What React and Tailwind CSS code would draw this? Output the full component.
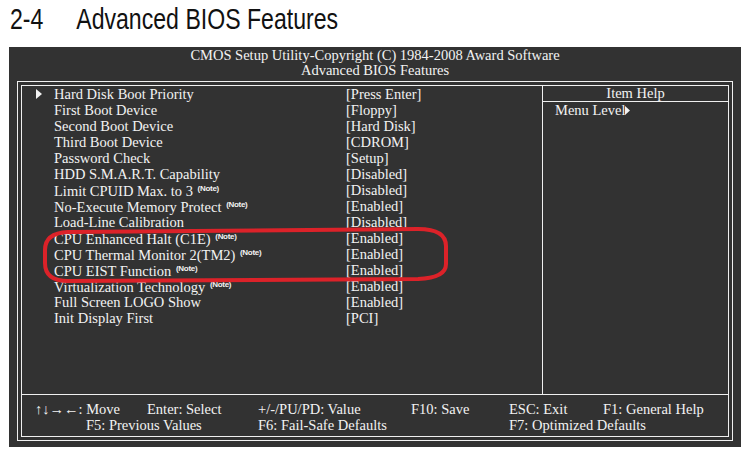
const serif = { fontFamily: '"Liberation Serif", "Times New Roman", serif' };

const rows = [
  { label: "Hard Disk Boot Priority", value: "[Press Enter]", arrow: true },
  { label: "First Boot Device", value: "[Floppy]" },
  { label: "Second Boot Device", value: "[Hard Disk]" },
  { label: "Third Boot Device", value: "[CDROM]" },
  { label: "Password Check", value: "[Setup]" },
  { label: "HDD S.M.A.R.T. Capability", value: "[Disabled]" },
  { label: "Limit CPUID Max. to 3", value: "[Disabled]", note: true },
  { label: "No-Execute Memory Protect", value: "[Enabled]", note: true },
  { label: "Load-Line Calibration", value: "[Disabled]" },
  { label: "CPU Enhanced Halt (C1E)", value: "[Enabled]", note: true },
  { label: "CPU Thermal Monitor 2(TM2)", value: "[Enabled]", note: true },
  { label: "CPU EIST Function", value: "[Enabled]", note: true },
  { label: "Virtualization Technology", value: "[Enabled]", note: true },
  { label: "Full Screen LOGO Show", value: "[Enabled]" },
  { label: "Init Display First", value: "[PCI]" },
];

function Note() {
  return (
    <span
      className="text-[8px] font-bold tracking-[-0.3px] align-[5px] ml-[1px]"
      style={{ fontFamily: '"Liberation Sans", Arial, sans-serif' }}
    >
      (Note)
    </span>
  );
}

function Triangle({ w = 6, h = 10 }) {
  return (
    <svg width={w} height={h} viewBox={`0 0 ${w} ${h}`} className="inline-block">
      <polygon points={`0,0 ${w},${h / 2} 0,${h}`} fill="#f2f2f2" />
    </svg>
  );
}

export default function App() {
  return (
    <div className="w-[744px] h-[455px] bg-white relative overflow-hidden">
      {/* page heading, condensed sans */}
      <div className="h-[47px] pl-[10px] pt-[3px]">
        <div
          className="flex text-[30px] leading-[32px] text-[#111] scale-x-[0.77] origin-left whitespace-nowrap"
          style={{ fontFamily: '"Liberation Sans", Arial, sans-serif' }}
        >
          <span className="w-[86px]">2-4</span>
          <span>Advanced BIOS Features</span>
        </div>
      </div>

      {/* bios screen */}
      <div className="ml-[9px] w-[732px] h-[400px] bg-[#323232] text-[#f2f2f2] text-[14.5px] leading-[15px]" style={serif}>
        <div className="pt-[1px] text-center">
          <div>CMOS Setup Utility-Copyright (C) 1984-2008 Award Software</div>
          <div>Advanced BIOS Features</div>
        </div>

        <div className="ml-[8px] mt-[3px] w-[716px] h-[360px] border border-[#f0f0f0] p-[3px]">
          <div className="h-full border border-[#f0f0f0] flex flex-col">
            <div className="flex h-[309px] border-b border-[#f0f0f0]">
              {/* settings list */}
              <div className="w-[521px] border-r border-[#f0f0f0]">
                {rows.map((r) => (
                  <div key={r.label} className="flex h-[16px] items-center leading-[16px]">
                    <div className="w-[32px] pl-[14px] flex items-center">{r.arrow && <Triangle />}</div>
                    <div className="w-[292px] whitespace-nowrap">
                      {r.label}
                      {r.note && <> <Note /></>}
                    </div>
                    <div>{r.value}</div>
                  </div>
                ))}
              </div>
              {/* item help */}
              <div className="flex-1">
                <div className="h-[16px] border-b border-[#f0f0f0] text-center leading-[15px]">Item Help</div>
                <div className="pl-[12px] h-[16px] leading-[16px] flex items-center">
                  Menu Level
                  <Triangle w={5} h={9} />
                </div>
              </div>
            </div>

            {/* key legend */}
            <div className="pt-[6px] leading-[16px] whitespace-nowrap">
              <div className="flex pl-[13px]">
                <span className="w-[112px]">↑↓→←: Move</span>
                <span className="w-[111px]">Enter: Select</span>
                <span className="w-[153px]">+/-/PU/PD: Value</span>
                <span className="w-[98px]">F10: Save</span>
                <span className="w-[94px]">ESC: Exit</span>
                <span>F1: General Help</span>
              </div>
              <div className="flex pl-[64px]">
                <span className="w-[172px]">F5: Previous Values</span>
                <span className="w-[251px]">F6: Fail-Safe Defaults</span>
                <span>F7: Optimized Defaults</span>
              </div>
            </div>
          </div>
        </div>
      </div>

      {/* red hand-drawn highlight */}
      <svg className="absolute left-0 top-0 pointer-events-none" width="744" height="455">
        <path
          d="M 68 232 L 418 229 Q 446 229 446 246 L 446 264 Q 446 278 418 279 L 68 281 Q 45 281 45 263 L 45 250 Q 45 233 68 232 Z"
          fill="none"
          stroke="#dc2229"
          strokeWidth="4"
        />
      </svg>
    </div>
  );
}
